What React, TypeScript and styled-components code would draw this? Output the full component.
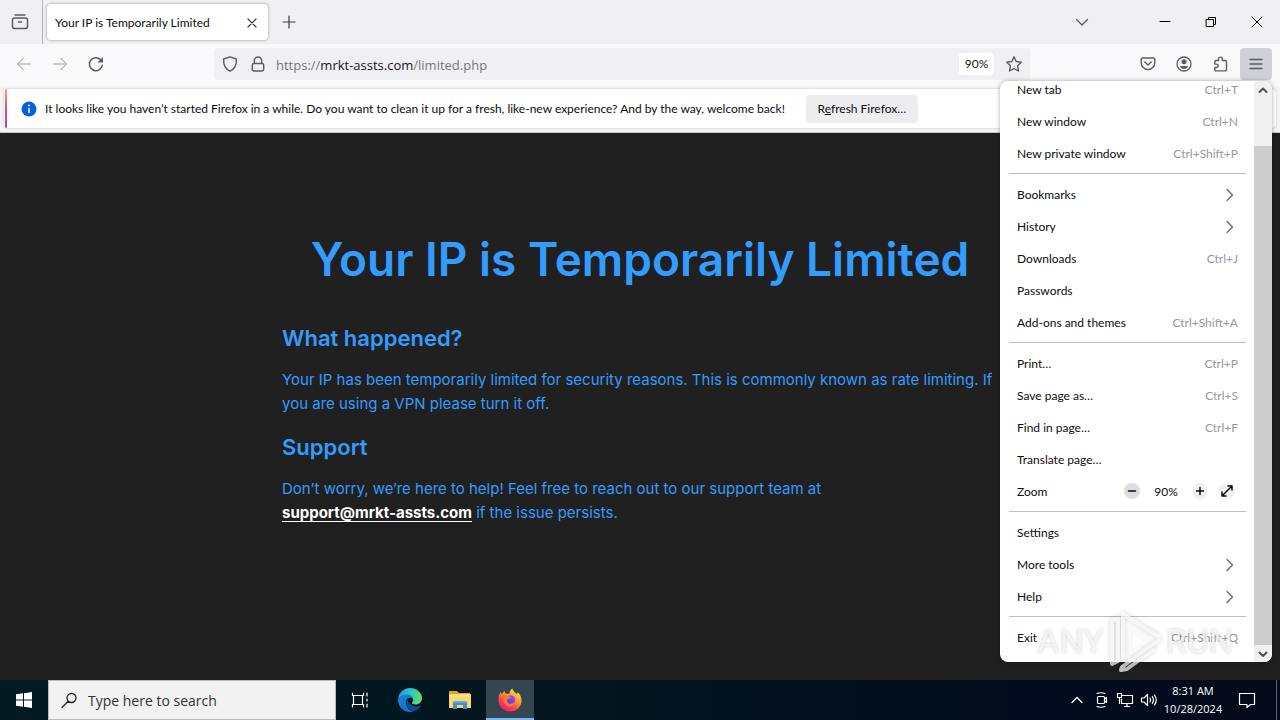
import React from "react";
import styled, { createGlobalStyle } from "styled-components";

const ui = `Lato, "Open Sans", sans-serif`;

const GlobalStyle = createGlobalStyle`
  * { box-sizing: border-box; }
  html, body { margin: 0; padding: 0; }
  body { font: 12px/16px ${ui}; color: #0c0c0d; background: #202020; overflow: hidden; }
  button, input { font: inherit; color: inherit; }
  button { border: 0; padding: 0; background: none; }
  svg { display: block; flex: none; overflow: visible; }
`;

const Desktop = styled.div`
  position: relative;
  min-height: 100vh;
  display: flex;
  flex-direction: column;
`;

/* ---- Tab strip ---- */
const TabStrip = styled.header`
  display: flex;
  align-items: center;
  height: 44px;
  background: #f0f0f4;
`;
const OverviewButton = styled.button`
  display: grid;
  place-items: center;
  width: 43px;
  height: 44px;
  padding-right: 3px;
  border-right: 1px solid #b4b4ba;
`;
const Tab = styled.div`
  display: flex;
  align-items: center;
  justify-content: space-between;
  width: 221px;
  height: 36px;
  margin-left: 4px;
  padding: 2px 8px 0;
  border-radius: 4px;
  background: #fff;
  box-shadow: 0 0 3px rgba(0, 0, 0, 0.4);
`;
const TabTitle = styled.span`
  white-space: nowrap;
`;
const StripButton = styled.button<{ $width: number }>`
  display: grid;
  place-items: center;
  width: ${(p) => p.$width}px;
  height: 44px;
`;
const CloseTab = styled.button`
  display: grid;
  place-items: center;
  width: 16px;
  height: 24px;
`;
const WindowControls = styled.div`
  display: flex;
  margin-left: auto;
`;

/* ---- Navigation toolbar ---- */
const NavBar = styled.nav`
  display: flex;
  align-items: center;
  height: 42px;
  padding: 0 8px 2px 6px;
  background: #f9f9fb;
`;
const ToolButton = styled.button<{ $faded?: boolean }>`
  display: grid;
  place-items: center;
  width: 36px;
  height: 32px;
  color: ${(p) => (p.$faded ? "#bcbcc1" : "#5b5b66")};
`;
const MenuButton = styled(ToolButton)`
  width: 32px;
  margin-left: 2px;
  border-radius: 4px;
  background: #cfcfd8;
`;
const Spacer = styled.div`
  flex: 6;
`;
const UrlBar = styled.div`
  flex: 48;
  display: flex;
  align-items: center;
  height: 32px;
  padding: 0 8px;
  border-radius: 4px;
  background: #f0f0f4;
  color: #5b5b66;
`;
const UrlIcons = styled.div`
  display: flex;
  gap: 12px;
  margin-right: 10px;
`;
const Address = styled.div`
  flex: 1;
  padding-top: 2px;
  font: 13px/20px "Open Sans", sans-serif;
  color: #77777f;
`;
const Host = styled.span`
  color: #15141a;
`;
const ZoomBadge = styled.button`
  width: 35px;
  height: 22px;
  margin-right: 12px;
  border-radius: 3px;
  background: #fff;
  color: #15141a;
`;
const StarButton = styled.button`
  display: grid;
  place-items: center;
`;

/* ---- Notification bar ---- */
const NoticeArea = styled.div`
  height: 47px;
  padding: 3px 4px 5px;
  background: #f4f4f6;
  border-bottom: 1px solid #c8c8cc;
`;
const Notice = styled.div`
  display: flex;
  align-items: center;
  height: 39px;
  padding-left: 15px;
  border-radius: 4px;
  background: linear-gradient(#ff9a56, #d64f95 50%, #8f4ec4) 1px 0 / 2px 100% no-repeat, #fff;
  box-shadow: 0 0 2px rgba(0, 0, 0, 0.25);
`;
const InfoIcon = styled.svg`
  margin: 0 8px 0 2px;
`;
const RefreshButton = styled.button`
  width: 112px;
  height: 28px;
  margin-left: 21px;
  border-radius: 4px;
  background: #ededf0;
`;

/* ---- Web page ---- */
const Page = styled.main`
  flex: 1;
  padding-top: 98px;
  background: #202020;
  color: #339cff;
  font: 15px/24px Inter, sans-serif;
`;
const Article = styled.article`
  max-width: 716px;
  margin: 0 auto;
`;
const Title = styled.h1`
  margin: 0 0 37px;
  text-align: center;
  white-space: nowrap;
  font-size: 46px;
  font-weight: 600;
  line-height: 56px;
`;
const Heading = styled.h2`
  margin: 0 0 16px;
  font-size: 22px;
  font-weight: 600;
  line-height: 28px;
`;
const Paragraph = styled.p`
  margin: 0 0 17px;
`;
const MailLink = styled.a`
  color: #fff;
  font-weight: 700;
  text-underline-offset: 3px;
`;

/* ---- Application menu ---- */
const MenuPanel = styled.aside`
  position: absolute;
  z-index: 1;
  top: 81px;
  right: 8px;
  bottom: 58px;
  display: flex;
  width: 272px;
  overflow: hidden;
  border-radius: 8px;
  background: #fff;
  box-shadow: 0 0 4px rgba(0, 0, 0, 0.35);
`;
const MenuList = styled.div`
  flex: 1;
  display: flex;
  flex-direction: column;
  justify-content: flex-end;
  padding: 0 8px 9px 9px;
`;
const Entry = styled.button`
  flex: none;
  display: flex;
  align-items: center;
  justify-content: space-between;
  height: 32px;
  padding: 2px 8px 0;
  text-align: left;
`;
const Shortcut = styled.span`
  color: #97979d;
`;
const Divider = styled.hr`
  flex: none;
  width: 100%;
  margin: 4px 0;
  border: 0;
  border-top: 1px solid #bdbdc0;
`;
const ZoomRow = styled.div`
  flex: none;
  display: flex;
  align-items: center;
  height: 32px;
  padding: 0 11px 0 8px;
`;
const ZoomLabel = styled.span`
  flex: 1;
  padding-top: 2px;
`;
const ZoomValue = styled.span`
  width: 52px;
  padding-top: 2px;
  text-align: center;
`;
const RoundButton = styled.button<{ $tone: string; $gap?: number }>`
  display: grid;
  place-items: center;
  width: 16px;
  height: 16px;
  margin-left: ${(p) => p.$gap ?? 0}px;
  border-radius: 8px;
  background: ${(p) => p.$tone};
  color: #0c0c0d;
`;
const ScrollBar = styled.div`
  display: flex;
  flex-direction: column;
  width: 18px;
  background: #f0f0f0;
`;
const ScrollArrow = styled.button`
  display: grid;
  place-items: center;
  height: 17px;
`;
const ScrollTrack = styled.div`
  flex: 1;
  padding-top: 48px;
`;
const ScrollThumb = styled.div`
  height: 100%;
  background: #cdcdcd;
`;

/* ---- Watermark ---- */
const Watermark = styled.div`
  position: absolute;
  z-index: 2;
  right: 47px;
  bottom: 46px;
  display: flex;
  align-items: center;
  gap: 4px;
  height: 66px;
  color: rgba(255, 255, 255, 0.7);
  font: 400 34px/40px Roboto, sans-serif;
  text-shadow: 0 0 3px rgba(0, 0, 0, 0.2);
  pointer-events: none;
`;
const WatermarkMark = styled.svg`
  filter: drop-shadow(0 0 2px rgba(0, 0, 0, 0.25));
`;

/* ---- Taskbar ---- */
const TaskBar = styled.footer`
  display: flex;
  align-items: center;
  height: 40px;
  background: linear-gradient(90deg, #021a22, #03151f 45%, #020b1d 80%, #020a1c);
  color: #fff;
`;
const TaskButton = styled.button<{ $active?: boolean }>`
  display: grid;
  place-items: center;
  width: 48px;
  height: 40px;
  margin-left: 2px;
  background: ${(p) => (p.$active ? "#34464f" : "none")};
  box-shadow: ${(p) => (p.$active ? "inset 0 -2px #76b9ed" : "none")};
`;
const StartButton = styled(TaskButton)`
  margin-left: 0;
`;
const SearchBox = styled.label`
  display: flex;
  align-items: center;
  gap: 11px;
  width: 288px;
  height: 40px;
  padding-left: 12px;
  border: 1px solid #b9bcbe;
  background: #f2f2f2;
  color: #1c1c1c;
`;
const SearchInput = styled.input`
  flex: 1;
  min-width: 0;
  padding: 2px 0 0;
  border: 0;
  outline: 0;
  background: none;
  font: 14px/20px "Open Sans", sans-serif;
  &::placeholder { color: #333; opacity: 1; }
`;
const Tray = styled.div`
  display: flex;
  align-items: center;
  height: 40px;
  margin-left: auto;
  margin-right: 3px;
  padding-right: 5px;
  border-right: 1px solid #5c6470;
`;
const TrayButton = styled.button<{ $wide?: boolean }>`
  display: grid;
  place-items: center;
  width: ${(p) => (p.$wide ? 48 : 24)}px;
  height: 40px;
`;
const Clock = styled.time`
  width: 60px;
  margin-left: 2px;
  text-align: center;
  font: 11px/18px "Open Sans", sans-serif;
`;

const Line = ({ d, size = 16, w = 1.3, color = "currentColor" }: { d: string; size?: number; w?: number; color?: string }) => (
  <svg width={size} height={size} viewBox={`0 0 ${size} ${size}`} fill="none" stroke={color} strokeWidth={w} strokeLinecap="round" strokeLinejoin="round" aria-hidden="true">
    <path d={d} />
  </svg>
);

const CHEVRON_RIGHT = "M5 2.500 10.500 8 5 13.500";

type Item = { label: string; keys?: string; sub?: boolean };
const groups: Item[][] = [
  [
    { label: "New tab", keys: "Ctrl+T" },
    { label: "New window", keys: "Ctrl+N" },
    { label: "New private window", keys: "Ctrl+Shift+P" },
  ],
  [
    { label: "Bookmarks", sub: true },
    { label: "History", sub: true },
    { label: "Downloads", keys: "Ctrl+J" },
    { label: "Passwords" },
    { label: "Add-ons and themes", keys: "Ctrl+Shift+A" },
  ],
  [
    { label: "Print…", keys: "Ctrl+P" },
    { label: "Save page as…", keys: "Ctrl+S" },
    { label: "Find in page…", keys: "Ctrl+F" },
    { label: "Translate page…" },
  ],
  [{ label: "Settings" }, { label: "More tools", sub: true }, { label: "Help", sub: true }],
  [{ label: "Exit", keys: "Ctrl+Shift+Q" }],
];

const EdgeLogo = () => (
  <svg width="26" height="26" viewBox="0 0 26 26" aria-hidden="true">
    <defs>
      <linearGradient id="edgeTop" x1="0" y1="0.3" x2="1" y2="0.5">
        <stop offset="0" stopColor="#1d9be0" />
        <stop offset="0.5" stopColor="#2fc3c8" />
        <stop offset="1" stopColor="#63de58" />
      </linearGradient>
      <linearGradient id="edgeBody" x1="0" y1="0" x2="0.6" y2="1">
        <stop offset="0" stopColor="#1683d6" />
        <stop offset="1" stopColor="#1173cc" />
      </linearGradient>
    </defs>
    <path d="M1 12C2 5 7 1 13 1c7 0 12 5 12 10 0 4-3 6.500-6.500 6.500-2.500 0-4-1-3.500-2 1-1 1.300-2 1-3.200C15.500 9.500 13 8 10 8c-4 0-7 1.500-9 4Z" fill="url(#edgeTop)" />
    <path d="M1 12c2-3 5-4.500 8.500-4.500 3 0 6 2 6.500 4.500-1-1-2-1.300-3-1.300-3 0-4.500 3-4 6 .6 4.200 4 7.300 8 7.600-1.200.500-2.600.7-4 .7C6 25 .5 19 1 12Z" fill="url(#edgeBody)" />
    <path d="M10.500 12C8 16 10 22 16 24.500c3-.5 6-2.500 7.500-5 .3-.6-.2-.9-.8-.6-2 .9-5 1-7.500-.4-3-1.700-4.500-4-4.700-6.500Z" fill="#0c4d98" />
  </svg>
);

const FolderLogo = () => (
  <svg width="22" height="20" viewBox="0 0 22 20" aria-hidden="true">
    <path d="M0 1h8l2 2h11v5H0Z" fill="#e4a01e" />
    <path d="M0 4h22v14H0Z" fill="#fbd669" />
    <path d="M0 4h22v3H0Z" fill="#ffe089" />
    <path d="M4 19v-6q0-2 2-2h10q2 0 2 2v6h-4v-4H8v4Z" fill="#3f8fd2" />
    <path d="M5 11h12v2H5Z" fill="#5aaae4" />
  </svg>
);

const FirefoxLogo = () => (
  <svg width="24" height="24" viewBox="0 0 24 24" aria-hidden="true">
    <defs>
      <linearGradient id="fxBody" x1="0.85" y1="0" x2="0.2" y2="1">
        <stop offset="0" stopColor="#fff04a" />
        <stop offset="0.4" stopColor="#ff9a25" />
        <stop offset="0.7" stopColor="#ff3f4c" />
        <stop offset="1" stopColor="#e3169b" />
      </linearGradient>
      <linearGradient id="fxGlobe" x1="0.8" y1="0" x2="0.2" y2="1">
        <stop offset="0" stopColor="#a04af0" />
        <stop offset="1" stopColor="#5240d8" />
      </linearGradient>
    </defs>
    <path d="M2.500 4c.3 1 .8 1.500 1.500 2C4.800 4.500 5.600 3.500 6.600 3c0 1.300.6 2 1.600 2.800h3.300C11.500 3 13 1.200 14.500.5 14.800 3 17 4 18.500 6c.8-.2 1-1 1-2 2.500 2 4 5 4 8.500C23.500 19 18.500 23.500 12 23.500S.5 18.500.5 12.300C.5 9 1 6 2.500 4Z" fill="url(#fxBody)" />
    <circle cx="12.500" cy="12" r="4.800" fill="url(#fxGlobe)" />
    <path d="M5 8.500C6.500 7 8.500 7 10 8c1 .6 2 .8 3 .8-.3 1.400-1.500 1.700-2.700 2-.8.300-1.300 1-1.300 2 0 2.200 2 3.500 4.200 3 1.600-.3 2.400-1.100 3.600-1-1 2.400-3 3.600-5.500 3.600C7 18.400 4.500 13.500 5 8.500Z" fill="#ff7a30" />
  </svg>
);

export default function App() {
  return (
    <Desktop>
      <GlobalStyle />
      <TabStrip>
        <OverviewButton aria-label="Firefox View">
          <Line size={18} w={1.5} d="M4 2h10M3.500 5h11q2 0 2 2v6.500q0 2-2 2h-11q-2 0-2-2V7q0-2 2-2ZM7.500 9h3" color="#5b5b66" />
        </OverviewButton>
        <Tab>
          <TabTitle>Your IP is Temporarily Limited</TabTitle>
          <CloseTab aria-label="Close tab">
            <Line d="M4 4l8 8M12 4l-8 8" w={1.2} color="#3a3a40" />
          </CloseTab>
        </Tab>
        <StripButton $width={42} aria-label="New tab">
          <Line d="M8 2v12M2 8h12" w={1.2} color="#3a3a40" />
        </StripButton>
        <WindowControls>
          <StripButton $width={120} aria-label="List all tabs">
            <Line d="M2.500 5.500 8 11l5.500-5.500" color="#5b5b66" />
          </StripButton>
          <StripButton $width={46} aria-label="Minimize">
            <Line d="M3 7.500h10" w={1} color="#000" />
          </StripButton>
          <StripButton $width={46} aria-label="Restore">
            <Line d="M3.500 5.500h7v7h-7ZM5.500 5.500v-2h7v7h-2" w={1} color="#000" />
          </StripButton>
          <StripButton $width={46} aria-label="Close">
            <Line d="M3 3l10 10M13 3 3 13" w={1} color="#000" />
          </StripButton>
        </WindowControls>
      </TabStrip>

      <NavBar>
        <ToolButton $faded aria-label="Back"><Line d="M14.500 8H1.500M7 2.500 1.500 8 7 13.500" /></ToolButton>
        <ToolButton $faded aria-label="Forward"><Line d="M1.500 8h13M9 2.500 14.500 8 9 13.500" /></ToolButton>
        <ToolButton aria-label="Reload">
          <svg width="16" height="16" viewBox="0 0 16 16" fill="none" stroke="currentColor" strokeWidth="1.500" strokeLinecap="round">
            <path d="M14.300 9.200A6.500 6.500 0 1 1 12.600 3.700" />
            <path d="M15 1v5.500H9.500Z" fill="currentColor" stroke="none" />
          </svg>
        </ToolButton>
        <Spacer />
        <UrlBar>
          <UrlIcons>
            <Line w={1.400} d="M8 .8 14.300 3c.5 5-1 9.500-6.300 12.200C2.700 12.500 1.200 8 1.700 3Z" />
            <Line w={1.500} d="M4 7.500h8q1.700 0 1.700 1.700v4q0 1.700-1.700 1.700H4q-1.700 0-1.700-1.700v-4Q2.300 7.500 4 7.500ZM4.300 7V4.700a3.700 3.700 0 0 1 7.400 0V7" />
          </UrlIcons>
          <Address>https://<Host>mrkt-assts.com</Host>/limited.php</Address>
          <ZoomBadge>90%</ZoomBadge>
          <StarButton aria-label="Bookmark this page">
            <Line w={1.400} d="M8 .8l2.200 4.700 5.100.7-3.700 3.600.9 5.200L8 12.500 3.500 15l.9-5.200L.7 6.200l5.100-.7Z" />
          </StarButton>
        </UrlBar>
        <Spacer />
        <ToolButton aria-label="Save to Pocket">
          <Line w={1.400} d="M2.500 2h11q1.300 0 1.300 1.300v3.500a6.800 6.800 0 0 1-13.600 0V3.300Q1.200 2 2.500 2ZM4.800 6 8 9l3.200-3" />
        </ToolButton>
        <ToolButton aria-label="Account">
          <svg width="16" height="16" viewBox="0 0 16 16" fill="currentColor">
            <circle cx="8" cy="8" r="7" fill="none" stroke="currentColor" strokeWidth="1.300" />
            <circle cx="8" cy="5.800" r="2.500" />
            <path d="M3.800 10h8.400c-.7 2-2.200 3-4.200 3s-3.500-1-4.200-3Z" />
          </svg>
        </ToolButton>
        <ToolButton aria-label="Extensions">
          <Line w={1.400} d="M6.500 4.500V3a1.900 1.900 0 0 1 3.800 0v1.500h3q1.200 0 1.200 1.200v8q0 1.200-1.200 1.200H4q-1.200 0-1.200-1.200V11.500H4.500a1.700 1.700 0 0 0 0-3.400H2.800V5.700q0-1.200 1.200-1.200Z" />
        </ToolButton>
        <MenuButton aria-label="Open application menu"><Line d="M2 3.500h12M2 8h12M2 12.500h12" /></MenuButton>
      </NavBar>

      <NoticeArea>
        <Notice role="status">
          <InfoIcon width="16" height="16" viewBox="0 0 16 16" aria-hidden="true">
            <circle cx="8" cy="8" r="7.500" fill="#0560df" />
            <path d="M8 7v5" stroke="#fff" strokeWidth="1.500" />
            <circle cx="8" cy="4.500" r="1" fill="#fff" />
          </InfoIcon>
          It looks like you haven’t started Firefox in a while. Do you want to clean it up for a fresh, like-new experience? And by the way, welcome back!
          <RefreshButton>R<u>e</u>fresh Firefox…</RefreshButton>
        </Notice>
      </NoticeArea>

      <Page>
        <Article>
          <Title>Your IP is Temporarily Limited</Title>
          <Heading>What happened?</Heading>
          <Paragraph>
            Your IP has been temporarily limited for security reasons. This is commonly known as rate limiting. If you are using a VPN please turn it off.
          </Paragraph>
          <Heading>Support</Heading>
          <Paragraph>
            Don’t worry, we’re here to help! Feel free to reach out to our support team at<br />
            <MailLink href="mailto:support@mrkt-assts.com">support@mrkt-assts.com</MailLink> if the issue persists.
          </Paragraph>
        </Article>
      </Page>

      <MenuPanel>
        <MenuList>
          {groups.map((group, i) => (
            <React.Fragment key={i}>
              {i > 0 && <Divider />}
              {group.map((item) => (
                <Entry key={item.label}>
                  <span>{item.label}</span>
                  {item.keys && <Shortcut>{item.keys}</Shortcut>}
                  {item.sub && <Line d={CHEVRON_RIGHT} color="#6a6a70" />}
                </Entry>
              ))}
              {i === 2 && (
                <ZoomRow>
                  <ZoomLabel>Zoom</ZoomLabel>
                  <RoundButton $tone="#dcdce2" aria-label="Zoom out"><Line d="M4.500 8h7" w={1.500} /></RoundButton>
                  <ZoomValue>90%</ZoomValue>
                  <RoundButton $tone="#f0f0f3" aria-label="Zoom in"><Line d="M4.500 8h7M8 4.500v7" w={1.500} /></RoundButton>
                  <RoundButton $tone="#f0f0f3" $gap={11} aria-label="Full screen">
                    <Line d="M3.500 12.500l9-9M9 3h4v4M3 9v4h4" w={1.500} />
                  </RoundButton>
                </ZoomRow>
              )}
            </React.Fragment>
          ))}
        </MenuList>
        <ScrollBar>
          <ScrollArrow aria-label="Scroll up"><Line size={10} w={2} d="M1.500 7 5 3.500 8.500 7" color="#505050" /></ScrollArrow>
          <ScrollTrack><ScrollThumb /></ScrollTrack>
          <ScrollArrow aria-label="Scroll down"><Line size={10} w={2} d="M1.500 3.500 5 7l3.500-3.500" color="#505050" /></ScrollArrow>
        </ScrollBar>
      </MenuPanel>

      <Watermark>
        <span>ANY</span>
        <WatermarkMark width="54" height="62" viewBox="0 0 54 62" fill="none" stroke="rgba(255,255,255,0.7)" strokeWidth="4" strokeLinejoin="round" strokeLinecap="round" aria-hidden="true">
          <path d="M15 47V4l36 23M4 10v44l6-3V9ZM51 30 14 57l-1 3 6-1 26-19" />
          <path d="M22 19v25l19-14Z" strokeWidth="1" />
        </WatermarkMark>
        <span>RUN</span>
      </Watermark>

      <TaskBar>
        <StartButton aria-label="Start">
          <svg width="16" height="16" viewBox="0 0 16 16" fill="#fff">
            <path d="M0 2.300 7 1.300V7.500H0ZM8 1.200 16 0v7.500H8ZM0 8.500h7v6.200l-7-1ZM8 8.500h8V16l-8-1.200Z" />
          </svg>
        </StartButton>
        <SearchBox>
          <Line d="M15 6a4.500 4.500 0 1 1-9 0a4.500 4.500 0 0 1 9 0ZM7.200 9.300 1 15.500" color="#222" />
          <SearchInput aria-label="Search" placeholder="Type here to search" />
        </SearchBox>
        <StartButton aria-label="Task view">
          <Line w={1.200} d="M.5 1v2.500h11V1M.5 15v-2.500h11V15M1.500 3.500v9M10.500 3.500v9M15 1v3M15 7v2M15 12v3" color="#fff" />
        </StartButton>
        <TaskButton aria-label="Microsoft Edge"><EdgeLogo /></TaskButton>
        <TaskButton aria-label="File Explorer"><FolderLogo /></TaskButton>
        <TaskButton $active aria-label="Firefox"><FirefoxLogo /></TaskButton>
        <Tray>
          <TrayButton aria-label="Show hidden icons"><Line d="M3 10.500l5-5 5 5" color="#fff" /></TrayButton>
          <TrayButton aria-label="Meet now">
            <Line w={1.200} d="M5.500 4.500h5q1 0 1 1v5q0 1-1 1h-5q-1 0-1-1v-5q0-1 1-1ZM11.500 7l2-1.500v5l-2-1.500M4 1.500q4-1.500 8 0M4 14.500q4 1.500 8 0" color="#fff" />
          </TrayButton>
          <TrayButton aria-label="Network">
            <Line w={1.200} d="M5.500 3.500h10v8H4.500V7M10 11.500v3M7.500 14.500h5M.5 1.500h4v4h-4ZM2.500 5.500v6" color="#fff" />
          </TrayButton>
          <TrayButton aria-label="Volume">
            <Line w={1.200} d="M.5 6h2.500l3.500-3.500v11L3 10H.5ZM9 6q1.300 2 0 4M11.300 4.500q2.300 3.500 0 7M13.500 3q3.500 5 0 10" color="#fff" />
          </TrayButton>
          <Clock>8:31 AM<br />10/28/2024</Clock>
          <TrayButton $wide aria-label="Notifications">
            <Line w={1.200} d="M.5 1.500h15v11h-4L8 15.500v-3H.5Z" color="#fff" />
          </TrayButton>
        </Tray>
      </TaskBar>
    </Desktop>
  );
}
